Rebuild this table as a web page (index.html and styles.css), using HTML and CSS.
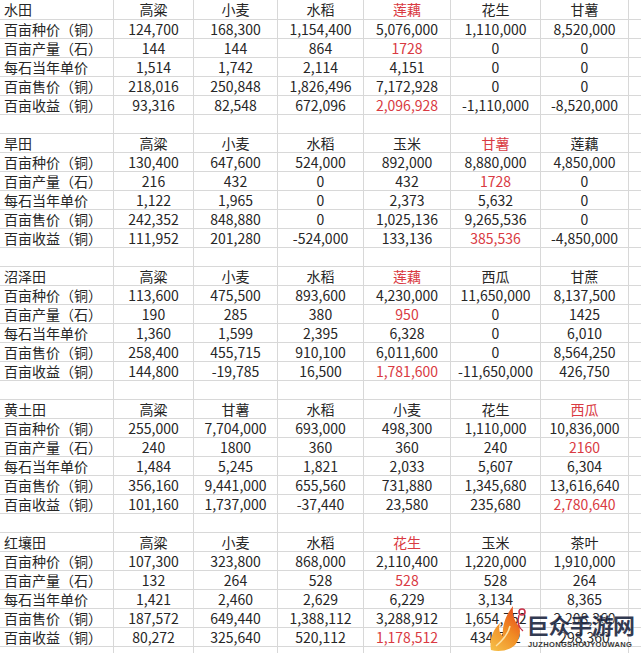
FILE: index.html
```html
<!DOCTYPE html>
<html lang="zh-CN">
<head>
<meta charset="utf-8">
<title>田地收益表</title>
<link rel="stylesheet" href="styles.css">
</head>
<body>
<div class="sheet">
  <div class="row"><span>水田</span><span>高粱</span><span>小麦</span><span>水稻</span><span class="red">莲藕</span><span>花生</span><span>甘薯</span><span></span></div>
  <div class="row"><span>百亩种价（铜）</span><span>124,700</span><span>168,300</span><span>1,154,400</span><span>5,076,000</span><span>1,110,000</span><span>8,520,000</span><span></span></div>
  <div class="row"><span>百亩产量（石）</span><span>144</span><span>144</span><span>864</span><span class="red">1728</span><span>0</span><span>0</span><span></span></div>
  <div class="row"><span>每石当年单价</span><span>1,514</span><span>1,742</span><span>2,114</span><span>4,151</span><span>0</span><span>0</span><span></span></div>
  <div class="row"><span>百亩售价（铜）</span><span>218,016</span><span>250,848</span><span>1,826,496</span><span>7,172,928</span><span>0</span><span>0</span><span></span></div>
  <div class="row"><span>百亩收益（铜）</span><span>93,316</span><span>82,548</span><span>672,096</span><span class="red">2,096,928</span><span>-1,110,000</span><span>-8,520,000</span><span></span></div>
  <div class="row"><span></span><span></span><span></span><span></span><span></span><span></span><span></span><span></span></div>

  <div class="row"><span>旱田</span><span>高粱</span><span>小麦</span><span>水稻</span><span>玉米</span><span class="red">甘薯</span><span>莲藕</span><span></span></div>
  <div class="row"><span>百亩种价（铜）</span><span>130,400</span><span>647,600</span><span>524,000</span><span>892,000</span><span>8,880,000</span><span>4,850,000</span><span></span></div>
  <div class="row"><span>百亩产量（石）</span><span>216</span><span>432</span><span>0</span><span>432</span><span class="red">1728</span><span>0</span><span></span></div>
  <div class="row"><span>每石当年单价</span><span>1,122</span><span>1,965</span><span>0</span><span>2,373</span><span>5,632</span><span>0</span><span></span></div>
  <div class="row"><span>百亩售价（铜）</span><span>242,352</span><span>848,880</span><span>0</span><span>1,025,136</span><span>9,265,536</span><span>0</span><span></span></div>
  <div class="row"><span>百亩收益（铜）</span><span>111,952</span><span>201,280</span><span>-524,000</span><span>133,136</span><span class="red">385,536</span><span>-4,850,000</span><span></span></div>
  <div class="row"><span></span><span></span><span></span><span></span><span></span><span></span><span></span><span></span></div>

  <div class="row"><span>沼泽田</span><span>高粱</span><span>小麦</span><span>水稻</span><span class="red">莲藕</span><span>西瓜</span><span>甘蔗</span><span></span></div>
  <div class="row"><span>百亩种价（铜）</span><span>113,600</span><span>475,500</span><span>893,600</span><span>4,230,000</span><span>11,650,000</span><span>8,137,500</span><span></span></div>
  <div class="row"><span>百亩产量（石）</span><span>190</span><span>285</span><span>380</span><span class="red">950</span><span>0</span><span>1425</span><span></span></div>
  <div class="row"><span>每石当年单价</span><span>1,360</span><span>1,599</span><span>2,395</span><span>6,328</span><span>0</span><span>6,010</span><span></span></div>
  <div class="row"><span>百亩售价（铜）</span><span>258,400</span><span>455,715</span><span>910,100</span><span>6,011,600</span><span>0</span><span>8,564,250</span><span></span></div>
  <div class="row"><span>百亩收益（铜）</span><span>144,800</span><span>-19,785</span><span>16,500</span><span class="red">1,781,600</span><span>-11,650,000</span><span>426,750</span><span></span></div>
  <div class="row"><span></span><span></span><span></span><span></span><span></span><span></span><span></span><span></span></div>

  <div class="row"><span>黄土田</span><span>高粱</span><span>甘薯</span><span>水稻</span><span>小麦</span><span>花生</span><span class="red">西瓜</span><span></span></div>
  <div class="row"><span>百亩种价（铜）</span><span>255,000</span><span>7,704,000</span><span>693,000</span><span>498,300</span><span>1,110,000</span><span>10,836,000</span><span></span></div>
  <div class="row"><span>百亩产量（石）</span><span>240</span><span>1800</span><span>360</span><span>360</span><span>240</span><span class="red">2160</span><span></span></div>
  <div class="row"><span>每石当年单价</span><span>1,484</span><span>5,245</span><span>1,821</span><span>2,033</span><span>5,607</span><span>6,304</span><span></span></div>
  <div class="row"><span>百亩售价（铜）</span><span>356,160</span><span>9,441,000</span><span>655,560</span><span>731,880</span><span>1,345,680</span><span>13,616,640</span><span></span></div>
  <div class="row"><span>百亩收益（铜）</span><span>101,160</span><span>1,737,000</span><span>-37,440</span><span>23,580</span><span>235,680</span><span class="red">2,780,640</span><span></span></div>
  <div class="row"><span></span><span></span><span></span><span></span><span></span><span></span><span></span><span></span></div>

  <div class="row"><span>红壤田</span><span>高粱</span><span>小麦</span><span>水稻</span><span class="red">花生</span><span>玉米</span><span>茶叶</span><span></span></div>
  <div class="row"><span>百亩种价（铜）</span><span>107,300</span><span>323,800</span><span>868,000</span><span>2,110,400</span><span>1,220,000</span><span>1,910,000</span><span></span></div>
  <div class="row"><span>百亩产量（石）</span><span>132</span><span>264</span><span>528</span><span class="red">528</span><span>528</span><span>264</span><span></span></div>
  <div class="row"><span>每石当年单价</span><span>1,421</span><span>2,460</span><span>2,629</span><span>6,229</span><span>3,134</span><span>8,365</span><span></span></div>
  <div class="row"><span>百亩售价（铜）</span><span>187,572</span><span>649,440</span><span>1,388,112</span><span>3,288,912</span><span>1,654,752</span><span>2,208,360</span><span></span></div>
  <div class="row"><span>百亩收益（铜）</span><span>80,272</span><span>325,640</span><span>520,112</span><span class="red">1,178,512</span><span>434,752</span><span>298,360</span><span></span></div>
  <div class="row"><span></span><span></span><span></span><span></span><span></span><span></span><span></span><span></span></div>
</div>

<div class="watermark">
  <svg class="wm-logo" width="40" height="50" viewBox="0 0 40 50">
    <defs>
      <linearGradient id="flame" x1="0" y1="1" x2="0.6" y2="0">
        <stop offset="0" stop-color="#f6c24a"/>
        <stop offset="0.6" stop-color="#f08a24"/>
        <stop offset="1" stop-color="#e8551c"/>
      </linearGradient>
    </defs>
    <path d="M3 49 C1 38 5 29 12 22 C10 29 12 33 15 35 C14 26 17 15 25 5 C24 14 27 21 31 25 C33 30 32 38 27 44 C21 50 10 51 3 49 Z" fill="url(#flame)"/>
    <path d="M8 45 C14 40 20 34 22 25" stroke="#fde3a6" stroke-width="1.5" fill="none"/>
    <circle cx="34" cy="11" r="3" fill="none" stroke="#c8324a" stroke-width="1.6"/>
    <path d="M31 14 C29 21 31 27 35 30" stroke="#c8324a" stroke-width="1.4" fill="none"/>
  </svg>
  <div class="wm-text">
    <span class="wm-name">巨众手游网</span>
    <span class="wm-pinyin">JUZHONGSHOUYOUWANG</span>
  </div>
</div>
</body>
</html>
```
FILE: styles.css
```css
* {
  margin: 0;
  padding: 0;
  box-sizing: border-box;
}

html, body {
  width: 641px;
  height: 653px;
  overflow: hidden;
  background: #ffffff;
}

body {
  position: relative;
  font-family: "Noto Sans CJK SC", "Noto Sans", sans-serif;
  font-size: 14px;
  color: #262626;
}

.sheet {
  display: flex;
  flex-direction: column;
  gap: 1px;
  width: 641px;
  background: #d8d8d8;
}

.row {
  display: grid;
  grid-template-columns: 113px 79px 83px 85px 86px 89px 87px 12px;
  gap: 1px;
  height: 18px;
}

.row:first-child {
  height: 19px;
}

.row > span {
  background: #ffffff;
  text-align: center;
  line-height: 18px;
  white-space: nowrap;
}

.row:first-child > span {
  line-height: 19px;
}

.row > span:first-child {
  text-align: left;
  padding-left: 4px;
}

.red {
  color: #d93a42;
}

.watermark {
  position: absolute;
  left: 488px;
  top: 601px;
  display: flex;
  align-items: flex-end;
}

.wm-logo {
  display: block;
  margin-right: -1px;
}

.wm-text {
  display: flex;
  flex-direction: column;
  align-items: flex-start;
}

.wm-name {
  font-family: "Noto Sans CJK SC", sans-serif;
  font-weight: 700;
  font-size: 22px;
  line-height: 30px;
  color: #1c2640;
  letter-spacing: -0.5px;
  opacity: 0.9;
  text-shadow: 0 0 2px #ffffff;
}

.wm-pinyin {
  font-family: "Liberation Sans", sans-serif;
  font-weight: 700;
  font-size: 7.5px;
  line-height: 12px;
  color: #3a3a3a;
  letter-spacing: 0.35px;
  margin-left: 1px;
}
```
